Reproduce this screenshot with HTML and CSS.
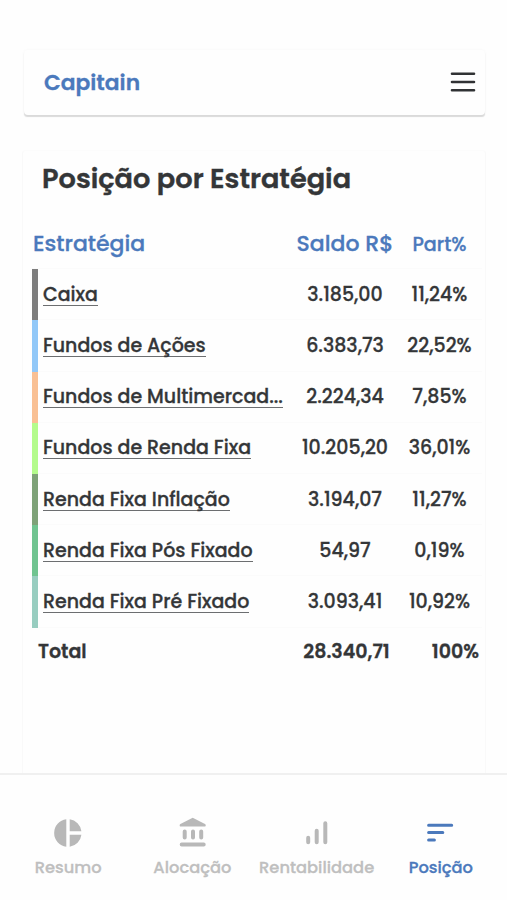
FILE: index.html
```html
<!DOCTYPE html>
<html lang="pt-BR">
<head>
<meta charset="utf-8">
<title>Capitain</title>
<link rel="stylesheet" href="styles.css">
</head>
<body>
<div class="app">
  <header class="topbar">
    <span class="brand">Capitain</span>
    <svg class="menu" viewBox="0 0 26 22" width="26" height="22"><path d="M2 1.8H24M2 10H24M2 18.2H24"/></svg>
  </header>
  <main class="card">
    <h1 class="title">Posição por Estratégia</h1>
    <div class="row head"><span class="name">Estratégia</span><span class="num">Saldo R$</span><span class="pct">Part%</span></div>
    <div class="row gray"><span class="name"><a>Caixa</a></span><span class="num">3.185,00</span><span class="pct">11,24%</span></div>
    <div class="row blue"><span class="name"><a>Fundos de Ações</a></span><span class="num">6.383,73</span><span class="pct">22,52%</span></div>
    <div class="row orange"><span class="name"><a>Fundos de Multimercad...</a></span><span class="num">2.224,34</span><span class="pct">7,85%</span></div>
    <div class="row lime"><span class="name"><a>Fundos de Renda Fixa</a></span><span class="num">10.205,20</span><span class="pct">36,01%</span></div>
    <div class="row moss"><span class="name"><a>Renda Fixa Inflação</a></span><span class="num">3.194,07</span><span class="pct">11,27%</span></div>
    <div class="row green"><span class="name"><a>Renda Fixa Pós Fixado</a></span><span class="num">54,97</span><span class="pct">0,19%</span></div>
    <div class="row teal"><span class="name"><a>Renda Fixa Pré Fixado</a></span><span class="num">3.093,41</span><span class="pct">10,92%</span></div>
    <div class="row total"><span class="name">Total</span><span class="num">28.340,71</span><span class="pct">100%</span></div>
  </main>
  <nav class="tabs">
    <div class="tab"><svg viewBox="0 0 32 32" width="32" height="32"><path d="M14.3 2.3V29.7A13.8 13.8 0 0 1 14.3 2.3ZM17.7 2.3A13.8 13.8 0 0 1 29.4 14.2H17.7ZM17.7 17.7H29.4A13.8 13.8 0 0 1 17.7 29.7Z"/></svg><span>Resumo</span></div>
    <div class="tab"><svg viewBox="0 0 32 32" width="32" height="32"><path d="M16.7 .7 29 6.9Q29.7 7.3 29.7 8.1V8.8Q29.7 9.5 29 9.5H4.4Q3.7 9.5 3.7 8.8V8.1Q3.7 7.3 4.4 6.9Z"/><path class="bars" d="M8.7 14.4V20.6M17 14.4V20.6M25.2 14.4V20.6M5.7 27.4H27.7"/></svg><span>Alocação</span></div>
    <div class="tab"><svg viewBox="0 0 32 32" width="32" height="32"><path class="bars" d="M7.2 20.8V25.2M15.7 13.7V25.2M24.3 6.3V25.2"/></svg><span>Rentabilidade</span></div>
    <div class="tab active"><svg viewBox="0 0 32 32" width="32" height="32"><path class="lines" d="M3.6 8.2H26.7M3.6 15.6H17.8M3.6 22.9H9.4"/></svg><span>Posição</span></div>
  </nav>
</div>
</body>
</html>
```
FILE: styles.css
```css
* { box-sizing: border-box; }
body { margin: 0; background: #fefefe; color: #343638; font-family: Poppins, Inter, "Open Sans", sans-serif; }
.app { height: 900px; padding-top: 50px; display: flex; flex-direction: column; overflow: hidden; }
.topbar { height: 65px; margin: 0 22px 0 24px; padding: 0 9px 0 20px; display: flex; align-items: center; justify-content: space-between; border-radius: 4px; box-shadow: 0 2px 1px -0.5px #dadada, 0 0 3px #f6f6f6; background: #fefefe; }
.brand { color: #4b79bc; font-size: 21.8px; font-weight: 600; line-height: 30px; -webkit-text-stroke: 0.3px; }
.menu { fill: none; stroke: #303234; stroke-width: 2.6; stroke-linecap: round; }
.card { margin: 35px 21px 0 22px; height: 623px; padding: 0 3px 0 9px; border: 1px solid #f9f9f9; border-top-color: #fcfcfc; border-bottom: 0; border-radius: 4px 4px 0 0; }
.title { margin: 0; height: 67px; padding: 9px 0 0 10px; font-size: 27.2px; line-height: 38px; font-weight: 600; white-space: nowrap; -webkit-text-stroke: 0.4px; }
.row { height: 51.2px; display: grid; grid-template-columns: 255px 104px 85px; align-items: center; font-size: 19px; font-weight: 500; line-height: 26px; white-space: nowrap; border-left: 6px solid transparent; box-shadow: inset 0 -1px #fbfbfb; -webkit-text-stroke: 0.3px; }
.num, .pct { text-align: center; }
.name { padding-left: 5px; }
.name a { border-bottom: 1.5px solid #6c6e70; display: inline-block; line-height: 20px; }
.head { color: #4b79bc; font-size: 22px; border-left: 0; grid-template-columns: 261px 104px 85px; }
.head .name { padding-left: 1px; }
.head .pct { font-size: 19.2px; padding-top: 2px; }
.gray { border-left-color: #7d7d7d; }
.blue { border-left-color: #92c8f8; }
.orange { border-left-color: #f9c094; }
.lime { border-left-color: #b4fb8c; }
.moss { border-left-color: #7ea278; }
.green { border-left-color: #70c490; }
.teal { border-left-color: #98cdc0; }
.total { height: 49px; font-weight: 600; box-shadow: none; }
.total .name { padding-left: 0; }
.total .num { padding-left: 3px; }
.total .pct { text-align: right; padding-right: 3px; }
.tabs { flex: 1; border-top: 2px solid #f0f0f0; display: flex; padding: 42px 4px 0 6px; background: #fefefe; }
.tab { flex: 1; display: flex; flex-direction: column; align-items: center; font-size: 16.3px; font-weight: 500; line-height: 24px; color: #bfbfbf; -webkit-text-stroke: 0.3px; }
.tab svg { fill: #b8b8b8; margin-bottom: 7px; }
.tab .bars { fill: none; stroke: #b8b8b8; stroke-width: 4; stroke-linecap: round; }
.tab .lines { fill: none; stroke: #4b79bc; stroke-width: 3; stroke-linecap: round; }
.tab.active { color: #4b79bc; }
```
